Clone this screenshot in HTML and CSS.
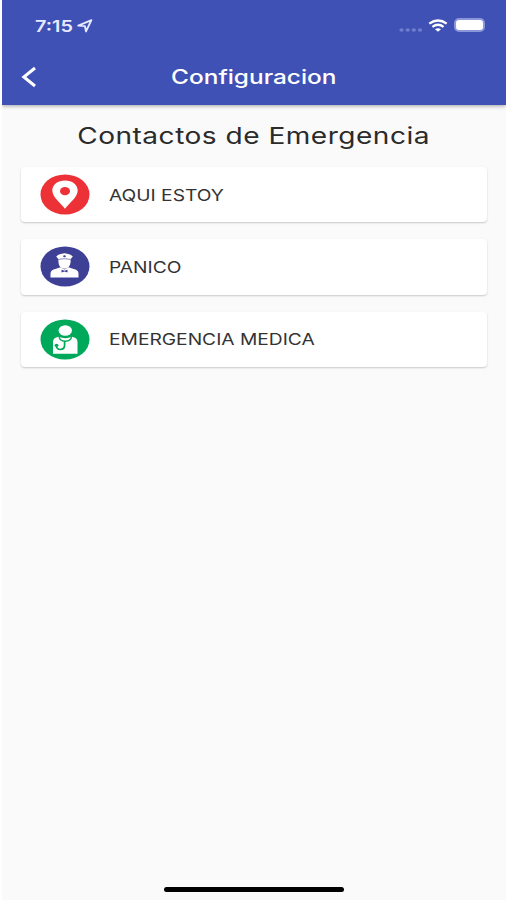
FILE: index.html
```html
<!DOCTYPE html>
<html lang="es">
<head>
    <meta charset="UTF-8">
    <meta name="viewport" content="width=device-width, initial-scale=1.0">
    <title>Configuracion</title>
    <link rel="stylesheet" href="styles.css">
</head>
<body>
    <div class="screen">
        <header class="app-bar">
            <div class="status-bar">
                <div class="status-left">
                    <span class="time">7:15</span>
                    <svg class="location" width="16" height="14" viewBox="0 0 16 14">
                        <path d="M1.3 6.6 L14.4 1.2 L9 12.4 L7.9 7.1 Z" fill="none" stroke="#e8eaff" stroke-width="1.9" stroke-linejoin="round"/>
                    </svg>
                </div>
                <div class="status-right">
                    <svg width="24" height="4" viewBox="0 0 24 4" class="signal">
                        <g fill="#6f7dd0">
                            <ellipse cx="2.5" cy="2" rx="2.2" ry="1.7"/>
                            <ellipse cx="8.7" cy="2" rx="2.2" ry="1.7"/>
                            <ellipse cx="14.8" cy="2" rx="2.2" ry="1.7"/>
                            <ellipse cx="21" cy="2" rx="2.2" ry="1.7"/>
                        </g>
                    </svg>
                    <svg width="20" height="13" viewBox="0 0 20 13" class="wifi">
                        <path d="M1.3 4.6 Q10 -1.8 18.7 4.6" fill="none" stroke="#fff" stroke-width="2.4"/>
                        <path d="M4.4 7.9 Q10 3.6 15.6 7.9" fill="none" stroke="#fff" stroke-width="2.2"/>
                        <path d="M7 10.2 Q10 8.1 13 10.2 L10 12.8 Z" fill="#fff"/>
                    </svg>
                    <div class="battery"></div>
                </div>
            </div>
            <div class="toolbar">
                <svg class="back" width="16" height="22" viewBox="0 0 16 22">
                    <path d="M14 2 L2.8 11 L14 20" fill="none" stroke="#fff" stroke-width="3"/>
                </svg>
                <h1 class="title"><span>Configuracion</span></h1>
            </div>
        </header>

        <main class="content">
            <h2 class="heading"><span>Contactos de Emergencia</span></h2>
            <div class="card">
                <svg class="icon" width="50" height="41" viewBox="0 0 50 41">
                    <ellipse cx="25" cy="20.5" rx="24.5" ry="20" fill="#ed3237"/>
                    <path d="M25 34.8 C22 30.5 12.3 23.5 12.3 16.6 C12.3 10.5 18 6.4 25 6.4 C32 6.4 37.7 10.5 37.7 16.6 C37.7 23.5 28 30.5 25 34.8 Z" fill="#fff"/>
                    <ellipse cx="25" cy="17.2" rx="5" ry="4.1" fill="#ed3237"/>
                </svg>
                <span class="label">AQUI ESTOY</span>
            </div>
            <div class="card">
                <svg class="icon" width="50" height="41" viewBox="0 0 50 41">
                    <ellipse cx="25" cy="20.5" rx="24.5" ry="20" fill="#3e4095"/>
                    <path d="M10.5 31.5 V27.5 Q10.5 24 16 22.8 L20.5 21.3 L24.5 23.5 L28.5 21.3 L33 22.8 Q38.5 24 38.5 27.5 V31.5 Z" fill="#fff"/>
                    <path d="M18.4 13 H30.6 V16 Q30 22.5 24.5 22.8 Q19 22.5 18.4 16 Z" fill="#fff"/>
                    <path d="M18.3 12.9 L16.2 10.4 Q18.5 8 24.5 7.3 Q30.5 8 32.8 10.4 L30.7 12.9 Z" fill="#fff"/>
                    <path d="M18.5 13.4 Q24.5 11.9 30.5 13.4" fill="none" stroke="#3e4095" stroke-width="0.6"/>
                    <ellipse cx="24.5" cy="10.3" rx="1.4" ry="1" fill="#3e4095"/>
                    <path d="M21.5 23.8 L24.5 24.8 L27.5 23.8 V26.4 L24.5 25.4 L21.5 26.4 Z" fill="#3e4095"/>
                </svg>
                <span class="label">PANICO</span>
            </div>
            <div class="card">
                <svg class="icon" width="50" height="41" viewBox="0 0 50 41">
                    <ellipse cx="25" cy="20.5" rx="24.5" ry="20" fill="#00a859"/>
                    <ellipse cx="25.3" cy="11.5" rx="6.7" ry="5.2" fill="#fff"/>
                    <path d="M13 34.7 V23 Q13 18.8 18.5 17.8 Q25.3 20.5 32 17.8 Q37.5 18.8 37.5 23 V34.7 Z" fill="#fff"/>
                    <path d="M19 17.5 Q19.6 22.2 25.3 22.2 Q31 22.2 31.6 17.5" fill="none" stroke="#00a859" stroke-width="1.4"/>
                    <path d="M24.6 22 V26.4 Q24.2 30.5 20.4 30.5 Q16.6 30.4 16.4 26.8" fill="none" stroke="#00a859" stroke-width="1.7"/>
                    <ellipse cx="16.5" cy="26.3" rx="1.9" ry="1.6" fill="#00a859"/>
                </svg>
                <span class="label">EMERGENCIA MEDICA</span>
            </div>
        </main>

        <div class="home-indicator"></div>
    </div>
</body>
</html>
```
FILE: styles.css
```css
body {
    margin: 0;
    background-color: #fff;
    font-family: Inter, sans-serif;
}

.screen {
    display: flex;
    flex-direction: column;
    height: 900px;
    margin: 0 1px 0 2px;
    background-color: #fafafa;
    overflow: hidden;
}

.app-bar {
    height: 105px;
    background-color: #3f51b5;
    color: #fff;
    box-shadow: 0 1px 4px rgba(0, 0, 0, 0.35);
}

.status-bar {
    display: flex;
    justify-content: space-between;
    height: 50px;
    padding: 0 21px 0 33px;
    align-items: center;
}

.status-left,
.status-right {
    display: flex;
    align-items: center;
}

.time {
    width: 42px;
    padding-top: 1px;
    font-size: 16px;
    font-weight: 600;
    line-height: 20px;
    color: #e8eaff;
    transform: scaleX(1.24);
    transform-origin: left;
}

.location {
    margin-top: 2px;
}

.signal {
    margin: 9px 5px 0 0;
}

.wifi {
    margin-right: 6px;
}

.battery {
    width: 27px;
    height: 10px;
    border: 2px solid #8c97d9;
    border-radius: 5px;
    background-color: #fff;
}

.toolbar {
    display: flex;
    align-items: center;
    height: 54px;
    padding: 0 19px;
}

.title {
    flex: 1;
    margin: 0 16px 0 0;
    font-size: 20px;
    font-weight: 500;
    line-height: 24px;
    text-align: center;
}

.title span,
.heading span {
    display: inline-block;
    transform: scaleX(1.22);
}

.content {
    flex: 1;
    padding: 16px 19px 0;
}

.heading {
    margin: 0 0 16px;
    font-size: 23px;
    font-weight: 400;
    line-height: 30px;
    letter-spacing: 0.4px;
    text-align: center;
    white-space: nowrap;
    color: #2b2b2b;
}

.card {
    display: flex;
    align-items: center;
    height: 55.3px;
    margin-bottom: 17px;
    padding-left: 19px;
    background-color: #fff;
    border-radius: 4px;
    box-shadow: 0 1px 2px rgba(0, 0, 0, 0.2);
}

.icon {
    flex: none;
    margin-right: 19px;
}

.label {
    font-size: 16px;
    line-height: 20px;
    white-space: nowrap;
    color: #333;
    transform: scaleX(1.2);
    transform-origin: left;
}

.home-indicator {
    width: 180px;
    height: 5px;
    margin: 0 auto 8px;
    border-radius: 3px;
    background-color: #000;
}
```
